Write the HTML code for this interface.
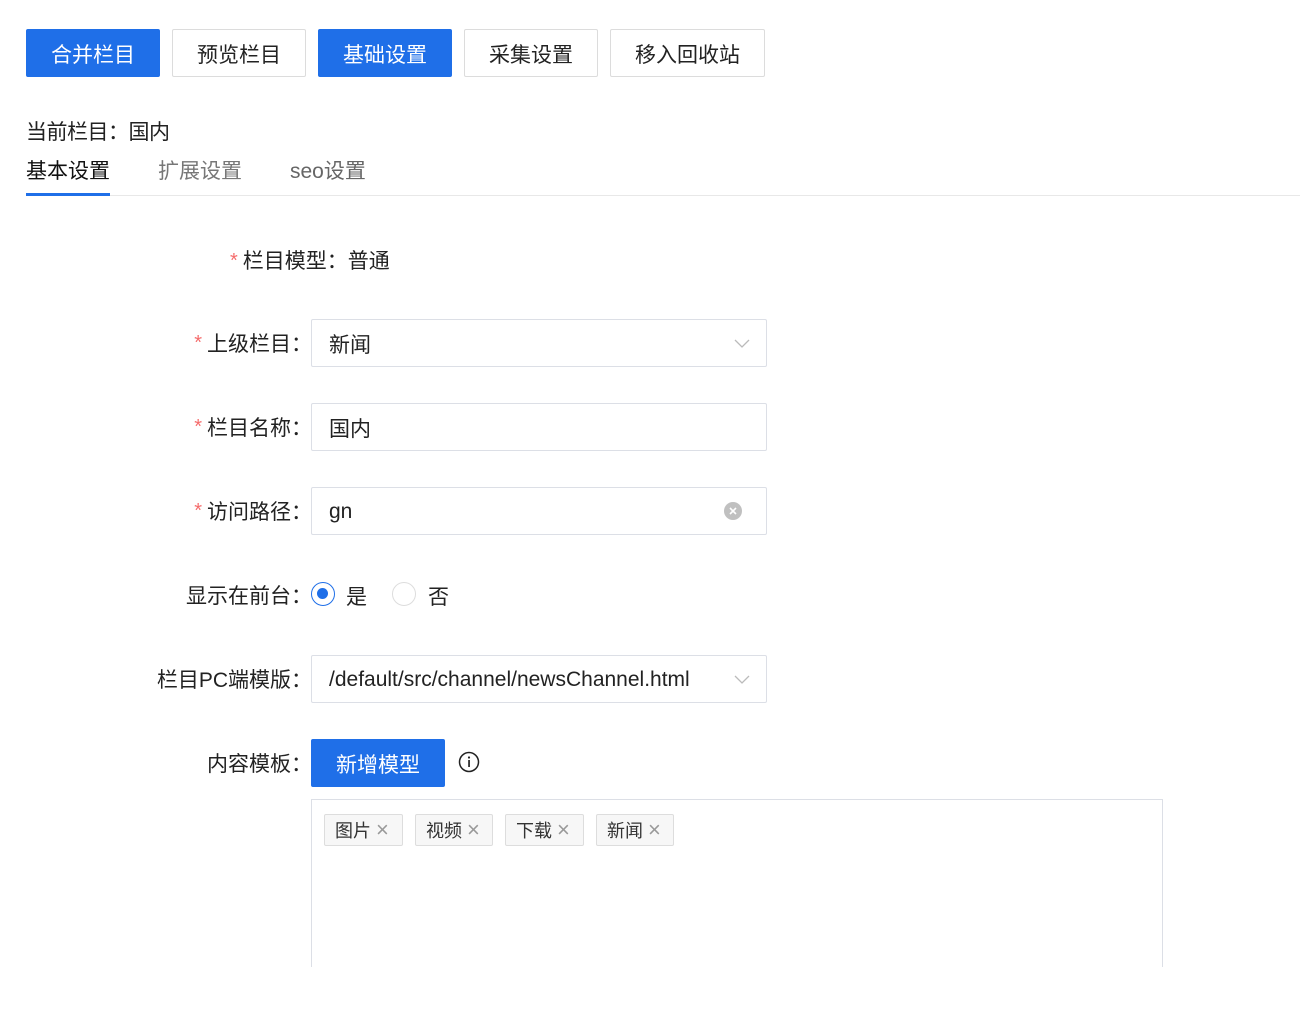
<!DOCTYPE html>
<html><head><meta charset="utf-8"><style>
*{box-sizing:border-box;margin:0;padding:0}
body{width:1300px;height:1014px;background:#fff;font-family:"Liberation Sans","Noto Sans CJK SC",sans-serif;color:#222;position:relative;overflow:hidden}
.a{position:absolute}
.btn{position:absolute;top:29px;height:48px;border:1px solid #dcdcdc;border-radius:2px;font-size:21px;display:flex;align-items:center;justify-content:center;background:#fff;color:#222;padding-top:1px}
.btn.p{background:#1f6fe8;border-color:#1f6fe8;color:#fff}
.lbl{position:absolute;right:988px;font-size:21px;white-space:nowrap;height:48px;display:flex;align-items:center;padding-bottom:1px}
.req{color:#f56c6c;margin-right:5px;position:relative;top:1px;font-size:20px}
.inp{position:absolute;left:311px;width:456px;height:48px;border:1px solid #dcdfe6;border-radius:2px;font-size:21px;display:flex;align-items:center;padding-left:17px;padding-top:1px}
.tag{position:absolute;top:814px;height:32px;border:1px solid #ddd;background:#f7f7f7;border-radius:2px;font-size:18px;display:flex;align-items:center;padding-left:10px;color:#333}
.tag span{color:#999;margin-left:5px;font-size:22px;font-weight:300;line-height:1}
</style></head><body>
<div class="btn p" style="left:26px;width:134px">合并栏目</div>
<div class="btn" style="left:172px;width:134px">预览栏目</div>
<div class="btn p" style="left:318px;width:134px">基础设置</div>
<div class="btn" style="left:464px;width:134px">采集设置</div>
<div class="btn" style="left:610px;width:155px">移入回收站</div>
<div class="a" style="left:26px;top:116px;font-size:21px;letter-spacing:-0.5px">当前栏目：国内</div>
<div class="a" style="left:26px;top:155px;font-size:21px;color:#111">基本设置</div>
<div class="a" style="left:158px;top:155px;font-size:21px;color:#777">扩展设置</div>
<div class="a" style="left:290px;top:155px;font-size:21px;color:#666">seo设置</div>
<div class="a" style="left:26px;top:195px;width:1274px;height:1px;background:#e8e8e8"></div>
<div class="a" style="left:26px;top:193px;width:84px;height:3px;background:#1f6fe8"></div>

<div class="a" style="left:230px;top:236px;height:48px;display:flex;align-items:center;font-size:21px"><span class="req">*</span>栏目模型：普通</div>
<div class="lbl" style="top:319px"><span class="req">*</span>上级栏目：</div>
<div class="inp" style="top:319px">新闻<svg class="a" style="right:16px;top:16px" width="16" height="16" viewBox="0 0 16 16"><path d="M1 4l7 7 7-7" fill="none" stroke="#bbb" stroke-width="1.3"/></svg></div>
<div class="lbl" style="top:403px"><span class="req">*</span>栏目名称：</div>
<div class="inp" style="top:403px">国内</div>
<div class="lbl" style="top:487px"><span class="req">*</span>访问路径：</div>
<div class="inp" style="top:487px">gn<svg class="a" style="left:412px;top:14px" width="18" height="18" viewBox="0 0 18 18"><circle cx="9" cy="9" r="9" fill="#c0c0c0"/><path d="M6 6l6 6M12 6l-6 6" stroke="#fff" stroke-width="1.6"/></svg></div>
<div class="lbl" style="top:571px">显示在前台：</div>
<div class="a" style="left:311px;top:582px;width:24px;height:24px;border:1.5px solid #1f6fe8;border-radius:50%"><div class="a" style="left:5px;top:5px;width:11px;height:11px;border-radius:50%;background:#1f6fe8"></div></div>
<div class="a" style="left:346px;top:581px;font-size:21px">是</div>
<div class="a" style="left:392px;top:582px;width:24px;height:24px;border:1px solid #ddd;border-radius:50%"></div>
<div class="a" style="left:428px;top:581px;font-size:21px">否</div>
<div class="lbl" style="top:655px">栏目PC端模版：</div>
<div class="inp" style="top:655px">/default/src/channel/newsChannel.html<svg class="a" style="right:16px;top:16px" width="16" height="16" viewBox="0 0 16 16"><path d="M1 4l7 7 7-7" fill="none" stroke="#bbb" stroke-width="1.3"/></svg></div>
<div class="lbl" style="top:739px">内容模板：</div>
<div class="btn p" style="left:311px;top:739px;width:134px">新增模型</div>
<svg class="a" style="left:458px;top:751px" width="22" height="22" viewBox="0 0 22 22"><circle cx="11" cy="11" r="9.5" fill="none" stroke="#222" stroke-width="1.5"/><rect x="10.2" y="9" width="1.7" height="7" fill="#222"/><circle cx="11" cy="6.5" r="1.1" fill="#222"/></svg>
<div class="a" style="left:311px;top:799px;width:852px;height:170px;border:1px solid #dcdfe6;border-bottom:none"></div>
<div class="tag" style="left:324px;width:79px">图片<span>×</span></div>
<div class="tag" style="left:415px;width:78px">视频<span>×</span></div>
<div class="tag" style="left:505px;width:79px">下载<span>×</span></div>
<div class="tag" style="left:596px;width:78px">新闻<span>×</span></div>
<div class="a" style="left:0;top:967px;width:1300px;height:47px;background:#fff"></div>
</body></html>
